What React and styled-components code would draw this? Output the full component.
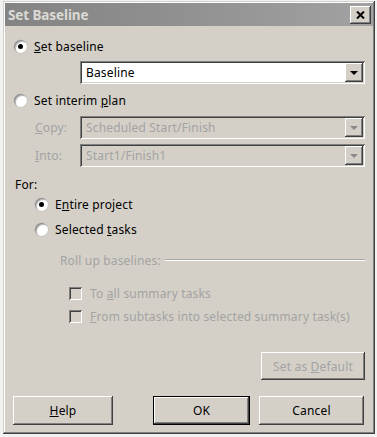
import React from "react";
import styled, { createGlobalStyle, css } from "styled-components";

const Global = createGlobalStyle`
  html, body { margin: 0; padding: 0; background: #f2f2f2; }
  body { font-family: "Noto Sans", "Liberation Sans", sans-serif; font-size: 12px; letter-spacing: 0.16px; color: #000; }
  #root { padding: 1px 0 0 3px; }
`;

const FACE = "#d4d0c8";

const raised = css`
  background: ${FACE};
  box-shadow: inset -1px -1px #404040, inset 1px 1px #ffffff, inset -2px -2px #808080, inset 2px 2px ${FACE};
`;
const sunken = css`
  box-shadow: inset 1px 1px #808080, inset -1px -1px #ffffff, inset 2px 2px #404040, inset -2px -2px ${FACE};
`;

const Window = styled.div`
  width: 372px;
  height: 433px;
  box-sizing: border-box;
  padding: 2px;
  background: ${FACE};
  box-shadow: inset -1px -1px #404040, inset 1px 1px ${FACE}, inset -2px -2px #808080, inset 2px 2px #ffffff;
  display: flex;
  flex-direction: column;
`;

const TitleBar = styled.div`
  height: 23px;
  flex: none;
  background: linear-gradient(to right, #848484, #8e8e8e 40%, #a2a2a2);
  display: flex;
  align-items: center;
  justify-content: space-between;
  padding: 0 2px 0 3px;
`;

const Title = styled.span`
  color: #dcdad5;
  font-weight: bold;
  font-size: 13.5px;
  letter-spacing: -0.1px;
`;

const CloseBtn = styled.div`
  ${raised};
  width: 21px;
  height: 18px;
  display: flex;
  align-items: center;
  justify-content: center;
`;

const Content = styled.div`
  display: flex;
  flex-direction: column;
  padding: 0 8px 0 10px;
`;

const Row = styled.div`
  display: flex;
  align-items: center;
  height: 18px;
  margin-top: ${(p) => p.$mt || 0}px;
  padding-left: ${(p) => p.$indent || 0}px;
  color: ${(p) => (p.$disabled ? "#a3a3a3" : "#000")};
`;

const RadioCircle = styled.span`
  width: 13px;
  height: 13px;
  border-radius: 50%;
  background: #fff;
  box-shadow: inset 1px 1px 0 0 #8c8c8c, inset 2px 2px 0 0 #c4c4c4, 0 0 0 0.5px #bdbab4;
  display: flex;
  align-items: center;
  justify-content: center;
  margin-right: 7px;
  margin-left: -1px;
  flex: none;
  &::after {
    content: "";
    width: 5px;
    height: 5px;
    border-radius: 50%;
    background: ${(p) => (p.$checked ? "#000" : "transparent")};
  }
`;

const CheckBox = styled.span`
  width: 13px;
  height: 13px;
  box-sizing: border-box;
  background: ${FACE};
  ${sunken};
  margin-right: 8px;
  flex: none;
`;

const ComboRow = styled.div`
  display: flex;
  align-items: center;
  margin-top: ${(p) => p.$mt || 0}px;
`;

const FieldLabel = styled.span`
  width: 45px;
  margin-left: 20px;
  color: #a3a3a3;
`;

const Combo = styled.div`
  margin-left: ${(p) => p.$ml || 0}px;
  flex: 1;
  height: 23px;
  box-sizing: border-box;
  padding: 2px 2px 2px 6px;
  background: ${(p) => (p.$disabled ? FACE : "#fff")};
  ${sunken};
  display: flex;
  align-items: center;
  justify-content: space-between;
  color: ${(p) => (p.$disabled ? "#a3a3a3" : "#000")};
`;

const DropBtn = styled.div`
  ${raised};
  width: 18px;
  height: 19px;
  display: flex;
  align-items: center;
  justify-content: center;
`;

const Arrow = styled.span`
  width: 0;
  height: 0;
  border-left: 4px solid transparent;
  border-right: 4px solid transparent;
  border-top: 4px solid ${(p) => (p.$disabled ? "#8a8a8a" : "#000")};
`;

const GroupHeader = styled(Row)`
  &::after {
    content: "";
    flex: 1;
    height: 0;
    margin-left: 4px;
    border-top: 1px solid #a8a8a8;
    border-bottom: 1px solid #ffffff;
  }
`;

const ButtonRow = styled.div`
  display: flex;
  justify-content: ${(p) => p.$justify || "flex-start"};
  align-items: center;
  margin-top: ${(p) => p.$mt || 0}px;
  margin-left: ${(p) => p.$ml || 0}px;
`;

const Button = styled.div`
  ${raised};
  width: ${(p) => p.$w}px;
  height: ${(p) => p.$h || 29}px;
  margin-left: ${(p) => p.$ml || 0}px;
  box-sizing: border-box;
  display: flex;
  align-items: center;
  justify-content: center;
  color: ${(p) => (p.$disabled ? "#a3a3a3" : "#000")};
  ${(p) =>
    p.$default &&
    css`
      box-shadow: inset 0 0 0 1px #000, inset -2px -2px #404040, inset 2px 2px #ffffff, inset -3px -3px #808080;
    `}
`;

function Radio({ checked, children, mt, indent }) {
  return (
    <Row $mt={mt} $indent={indent}>
      <RadioCircle $checked={checked} />
      <span>{children}</span>
    </Row>
  );
}

function Check({ children, mt }) {
  return (
    <Row $mt={mt} $indent={54} $disabled>
      <CheckBox />
      <span>{children}</span>
    </Row>
  );
}

export default function App() {
  return (
    <>
      <Global />
      <Window>
        <TitleBar>
          <Title>Set Baseline</Title>
          <CloseBtn>
            <svg width="9" height="8" viewBox="0 0 9 8">
              <path d="M1 0.5 L8 7.5 M8 0.5 L1 7.5" stroke="#000" strokeWidth="2" />
            </svg>
          </CloseBtn>
        </TitleBar>
        <Content>
          <Radio checked mt={11}>
            <u>S</u>et baseline
          </Radio>
          <ComboRow $mt={6}>
            <Combo $ml={65}>
              <span>Baseline</span>
              <DropBtn>
                <Arrow />
              </DropBtn>
            </Combo>
          </ComboRow>
          <Radio mt={7}>
            Set interim <u>p</u>lan
          </Radio>
          <ComboRow $mt={7}>
            <FieldLabel>
              <u>C</u>opy:
            </FieldLabel>
            <Combo $disabled>
              <span>Scheduled Start/Finish</span>
              <DropBtn>
                <Arrow $disabled />
              </DropBtn>
            </Combo>
          </ComboRow>
          <ComboRow $mt={5}>
            <FieldLabel>
              <u>I</u>nto:
            </FieldLabel>
            <Combo $disabled>
              <span>Start1/Finish1</span>
              <DropBtn>
                <Arrow $disabled />
              </DropBtn>
            </Combo>
          </ComboRow>
          <Row $mt={8} $indent={-2}>
            For:
          </Row>
          <Radio checked mt={2} indent={21}>
            E<u>n</u>tire project
          </Radio>
          <Radio mt={7} indent={21}>
            Selected <u>t</u>asks
          </Radio>
          <GroupHeader $mt={13} $indent={45} $disabled>
            Roll up baselines:
          </GroupHeader>
          <Check mt={15}>
            To <u>a</u>ll summary tasks
          </Check>
          <Check mt={5}>
            <u>F</u>rom subtasks into selected summary task(s)
          </Check>
          <ButtonRow $justify="flex-end" $mt={27}>
            <Button $w={104} $h={28} $disabled>
              Set as&nbsp;<u>D</u>efault
            </Button>
          </ButtonRow>
          <ButtonRow $mt={16} $ml={-2}>
            <Button $w={100}>
              <u>H</u>elp
            </Button>
            <Button $w={97} $ml={40} $default>
              OK
            </Button>
            <Button $w={105} $ml={9}>
              Cancel
            </Button>
          </ButtonRow>
        </Content>
      </Window>
    </>
  );
}
